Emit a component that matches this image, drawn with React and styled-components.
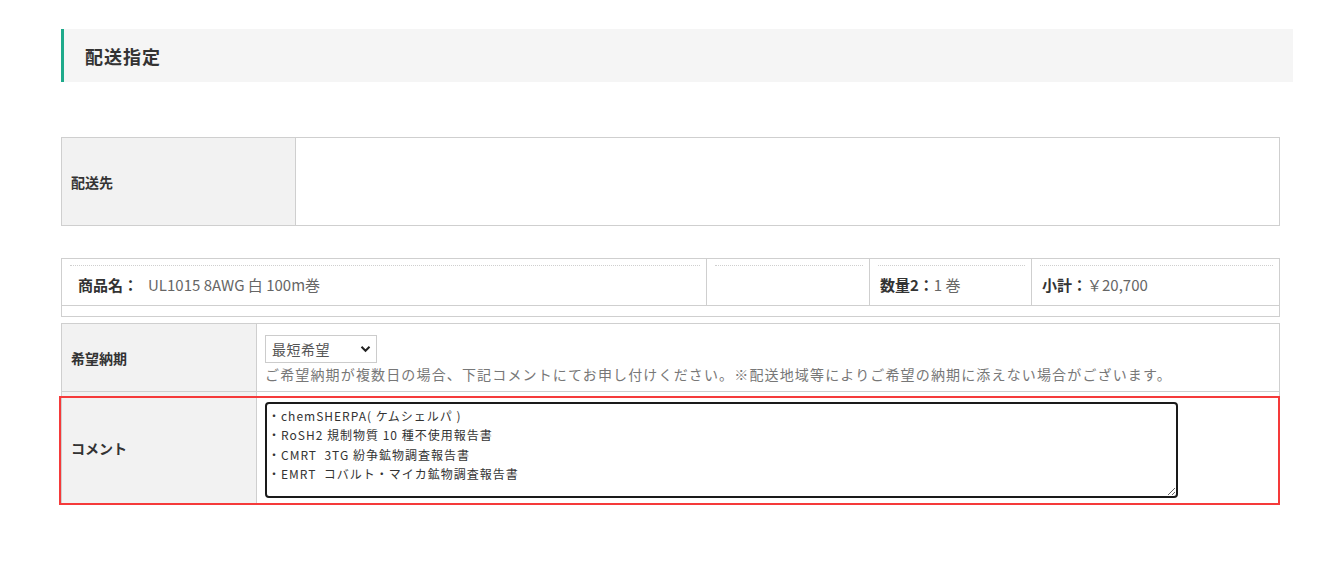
import React from "react";
import styled, { createGlobalStyle } from "styled-components";

const Global = createGlobalStyle`
  html, body { margin: 0; padding: 0; background: #fff; }
  body {
    font-family: "Noto Sans CJK JP", "Noto Sans", sans-serif;
    color: #333;
  }
`;

const Page = styled.div`
  padding: 29px 0 40px 61px;
  width: 1232px;
`;

const SectionHeader = styled.h2`
  margin: 0;
  height: 53px;
  box-sizing: border-box;
  display: flex;
  align-items: center;
  background: #f5f5f5;
  border-left: 3px solid #1eaa8b;
  padding-left: 21px;
  font-size: 18px;
  font-weight: 700;
  color: #333;
  letter-spacing: 1px;
`;

const Table = styled.table`
  width: 1219px;
  border-collapse: collapse;
  margin-top: ${(p) => p.$mt || 0}px;
  table-layout: fixed;
`;

const LabelCell = styled.th`
  width: ${(p) => p.$w}px;
  box-sizing: border-box;
  background: #f2f2f2;
  border: 1px solid #cfcfcf;
  text-align: left;
  padding: 0 0 0 9px;
  font-size: 14px;
  font-weight: 700;
  color: #333;
  vertical-align: middle;
  height: ${(p) => p.$h}px;
`;

const ValueCell = styled.td`
  border: 1px solid #cfcfcf;
  background: #fff;
  padding: ${(p) => p.$pad || "0"};
  vertical-align: ${(p) => p.$va || "middle"};
`;

const ProductCell = styled.td`
  position: relative;
  width: ${(p) => (p.$w ? `${p.$w}px` : "auto")};
  border: 1px solid #cfcfcf;
  height: 47px;
  box-sizing: border-box;
  padding: 5px 0 0 ${(p) => p.$pl}px;
  font-size: 15px;
  line-height: 22px;
  color: #666;
  vertical-align: middle;
  &::before {
    content: "";
    position: absolute;
    top: 6px;
    left: 8px;
    right: 6px;
    border-top: 1px dotted #cfcfcf;
  }
`;

const Key = styled.span`
  font-weight: 700;
  color: #333;
  margin-right: ${(p) => p.$mr || 0}px;
`;

const EmptyRow = styled.td`
  height: 10px;
  border: 1px solid #cfcfcf;
  padding: 0;
`;

const DeliveryWrap = styled.div`
  position: relative;
  margin-top: 6px;
  width: 1219px;
`;

const Highlight = styled.div`
  position: absolute;
  top: 73px;
  left: -2px;
  width: 1221px;
  height: 109px;
  box-sizing: border-box;
  border: 2px solid #f53a3a;
  pointer-events: none;
`;

const SelectWrap = styled.div`
  position: relative;
  display: inline-block;
  width: 112px;
  height: 28px;
`;

const Select = styled.select`
  appearance: none;
  -webkit-appearance: none;
  width: 100%;
  height: 100%;
  box-sizing: border-box;
  border: 1px solid #cccccc;
  border-radius: 0;
  background: #fff;
  padding: 0 0 0 6px;
  font-family: "Noto Sans CJK JP", sans-serif;
  font-size: 14px;
  letter-spacing: 0.5px;
  color: #555;
  outline: none;
`;

const Chevron = styled.svg`
  position: absolute;
  right: 6px;
  top: 10px;
  width: 11px;
  height: 8px;
  pointer-events: none;
`;

const Note = styled.p`
  margin: 1px 0 0;
  font-size: 14px;
  letter-spacing: 1.15px;
  color: #777;
  line-height: 20px;
`;

const Comment = styled.textarea`
  display: block;
  width: 913px;
  height: 96px;
  box-sizing: border-box;
  border: 2px solid #1a1a1a;
  border-radius: 4px;
  padding: 2px 1px;
  font-family: "Noto Sans CJK JP", sans-serif;
  font-size: 12px;
  letter-spacing: 1px;
  line-height: 19.3px;
  color: #333;
  resize: vertical;
  outline: none;
`;

const commentText = `・chemSHERPA( ケムシェルパ )
・RoSH2 規制物質 10 種不使用報告書
・CMRT  3TG 紛争鉱物調査報告書
・EMRT  コバルト・マイカ鉱物調査報告書`;

export default function App() {
  return (
    <>
      <Global />
      <Page>
        <SectionHeader>配送指定</SectionHeader>

        <Table $mt={55}>
          <tbody>
            <tr>
              <LabelCell $w={234} $h={88}>配送先</LabelCell>
              <ValueCell />
            </tr>
          </tbody>
        </Table>

        <Table $mt={32}>
          <tbody>
            <tr>
              <ProductCell $pl={16}>
                <Key $mr={10}>商品名：</Key>UL1015 8AWG 白 100m巻
              </ProductCell>
              <ProductCell $w={163} $pl={10} />
              <ProductCell $w={162} $pl={10}>
                <Key>数量2：</Key>1 巻
              </ProductCell>
              <ProductCell $w={248} $pl={10}>
                <Key>小計：</Key>￥20,700
              </ProductCell>
            </tr>
            <tr>
              <EmptyRow colSpan={4} />
            </tr>
          </tbody>
        </Table>

        <DeliveryWrap>
          <Table>
            <tbody>
              <tr>
                <LabelCell $w={195} $h={68}>希望納期</LabelCell>
                <ValueCell $pad="9px 0 6px 8px">
                  <SelectWrap>
                    <Select defaultValue="最短希望">
                      <option>最短希望</option>
                    </Select>
                    <Chevron viewBox="0 0 11 8">
                      <path d="M1.5 1.8 L5.5 5.8 L9.5 1.8" fill="none" stroke="#222" strokeWidth="2" />
                    </Chevron>
                  </SelectWrap>
                  <Note>
                    ご希望納期が複数日の場合、下記コメントにてお申し付けください。※配送地域等によりご希望の納期に添えない場合がございます。
                  </Note>
                </ValueCell>
              </tr>
              <tr>
                <LabelCell $w={195} $h={113}>コメント</LabelCell>
                <ValueCell $pad="10px 0 6px 8px">
                  <Comment defaultValue={commentText} />
                </ValueCell>
              </tr>
            </tbody>
          </Table>
          <Highlight />
        </DeliveryWrap>
      </Page>
    </>
  );
}
